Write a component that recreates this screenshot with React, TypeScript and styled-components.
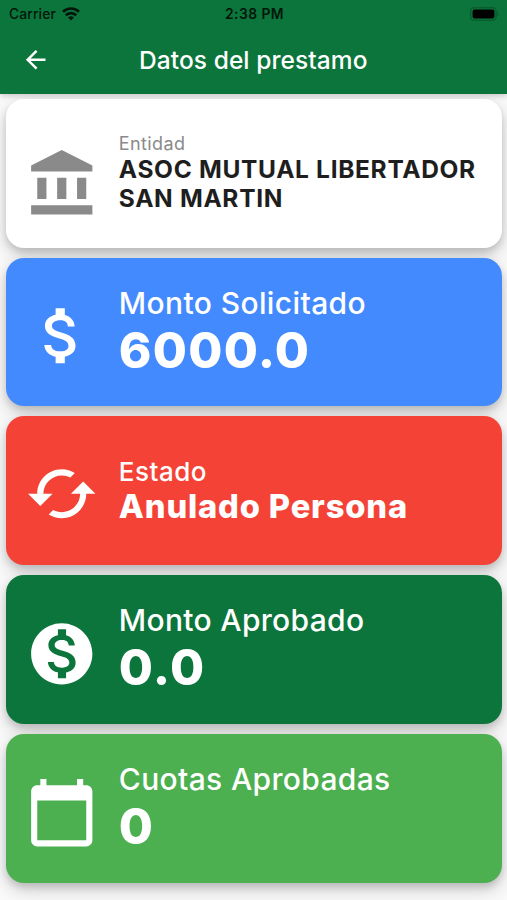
import React from "react";
import styled, { createGlobalStyle } from "styled-components";

const GlobalStyle = createGlobalStyle`
  * { box-sizing: border-box; }
  body { margin: 0; background: #fafafa; overflow: hidden; }
`;

const Screen = styled.main`
  width: 507px;
  height: 900px;
  display: flex;
  flex-direction: column;
  overflow: hidden;
  background: #fafafa;
  font-family: Inter, "Liberation Sans", sans-serif;
`;

const Header = styled.header`
  flex: none;
  height: 93.6px;
  background: #0b753b;
  box-shadow: 0 2px 6px rgba(0, 0, 0, 0.2);
`;

const StatusBar = styled.div`
  height: 27px;
  padding: 1px 7px 0 9px;
  display: grid;
  grid-template-columns: 1fr auto 1fr;
  align-items: center;
  color: #03150b;
  font-size: 13.8px;
  line-height: 26px;
`;

const Carrier = styled.div`
  display: flex;
  align-items: center;
  gap: 6px;
  font-weight: 500;
  letter-spacing: 0.15px;
`;

const Clock = styled.div`
  font-weight: 600;
  letter-spacing: 0.45px;
`;

const BatterySlot = styled.div`
  display: flex;
  justify-content: flex-end;
`;

const NavBar = styled.div`
  height: 65.4px;
  padding: 0 21px 0 20.5px;
  display: grid;
  grid-template-columns: 29.4px 1fr 29.4px;
  align-items: center;
`;

const BackButton = styled.button`
  display: flex;
  padding: 0;
  border: 0;
  background: none;
  color: #fff;
`;

const Title = styled.h1`
  margin: 0;
  padding-top: 1.4px;
  text-align: center;
  color: #fff;
  font-size: 24.5px;
  line-height: 29px;
  font-weight: 500;
  letter-spacing: 0.08px;
`;

const CardList = styled.section`
  display: flex;
  flex-direction: column;
  gap: 10px;
  padding: 5.2px 5px 0 6px;
`;

const Card = styled.article<{ $bg: string; $fg: string }>`
  height: 148.8px;
  flex: none;
  display: flex;
  align-items: center;
  gap: 20px;
  padding: 0 19.3px;
  border-radius: 18px;
  background: ${(p) => p.$bg};
  color: ${(p) => p.$fg};
  box-shadow: 0 4px 7px rgba(0, 0, 0, 0.13), 0 7px 18px rgba(0, 0, 0, 0.18);
`;

const CardIcon = styled.svg<{ $drop: number }>`
  flex: none;
  width: 73.5px;
  height: 73.5px;
  margin-top: ${(p) => p.$drop * 2}px;
  fill: currentColor;
`;

const Copy = styled.div<{ $top: number }>`
  flex: 1;
  min-width: 0;
  padding-top: ${(p) => p.$top}px;
`;

const Label = styled.div<{ $size: number; $spacing: number; $weight: number }>`
  font-size: ${(p) => p.$size}px;
  font-weight: ${(p) => p.$weight};
  line-height: 1.2;
  letter-spacing: ${(p) => p.$spacing}px;
  white-space: nowrap;
`;

const Value = styled.div<{ $size: number; $spacing: number; $weight: number; $color: string }>`
  font-size: ${(p) => p.$size}px;
  font-weight: ${(p) => p.$weight};
  line-height: 1.195;
  letter-spacing: ${(p) => p.$spacing}px;
  color: ${(p) => p.$color};
  white-space: pre-line;
`;

const cards = [
  {
    label: "Entidad", value: "ASOC MUTUAL LIBERTADOR\nSAN MARTIN",
    bg: "#ffffff", fg: "#8a8a8a", valueColor: "#1e1e1e", drop: 11, top: 0.7,
    labelSize: 18, labelSpacing: 0.4, labelWeight: 400, valueSize: 24.5, valueSpacing: 0.67, weight: 700,
    path: "M4 10h3v7H4zM10.5 10h3v7h-3zM2 19h20v3H2zM17 10h3v7h-3zM12 1L2 6v2h20V6z",
  },
  {
    label: "Monto Solicitado", value: "6000.0",
    bg: "#448aff", fg: "#ffffff", valueColor: "#ffffff", drop: 3.7, top: 2,
    labelSize: 30, labelSpacing: 0.38, labelWeight: 450, valueSize: 49.4, valueSpacing: 1.3, weight: 800,
    path: "M11.8 10.9c-2.27-.59-3-1.2-3-2.15 0-1.09 1.01-1.85 2.7-1.85 1.78 0 2.44.85 2.5 2.1h2.21c-.07-1.72-1.12-3.3-3.21-3.81V3h-3v2.16c-1.94.42-3.5 1.68-3.5 3.61 0 2.31 1.91 3.46 4.7 4.13 2.5.6 3 1.48 3 2.41 0 .69-.49 1.79-2.7 1.79-2.06 0-2.87-.92-2.98-2.1h-2.2c.12 2.19 1.76 3.42 3.68 3.83V21h3v-2.15c1.95-.37 3.5-1.5 3.5-3.55 0-2.84-2.43-3.81-4.7-4.4z",
  },
  {
    label: "Estado", value: "Anulado Persona",
    bg: "#f44336", fg: "#ffffff", valueColor: "#ffffff", drop: 2.6, top: -0,
    labelSize: 26, labelSpacing: 0.5, labelWeight: 450, valueSize: 32.7, valueSpacing: 0.83, weight: 800,
    path: "M19 8l-4 4h3c0 3.31-2.69 6-6 6-1.01 0-1.97-.25-2.8-.7l-1.46 1.46C8.97 19.54 10.43 20 12 20c4.42 0 8-3.58 8-8h3l-4-4zM6 12c0-3.31 2.69-6 6-6 1.01 0 1.97.25 2.8.7l1.46-1.46C15.03 4.46 13.57 4 12 4c-4.42 0-8 3.58-8 8H1l4 4 4-4H6z",
  },
  {
    label: "Monto Aprobado", value: "0.0",
    bg: "#0b753b", fg: "#ffffff", valueColor: "#ffffff", drop: 3.7, top: 0.4,
    labelSize: 30, labelSpacing: 0.32, labelWeight: 450, valueSize: 49.4, valueSpacing: 1.3, weight: 800,
    path: "M12 2C6.48 2 2 6.48 2 12s4.48 10 10 10 10-4.48 10-10S17.52 2 12 2zm1.41 16.09V20h-2.67v-1.93c-1.71-.36-3.16-1.46-3.27-3.4h1.96c.1 1.05.82 1.87 2.65 1.87 1.96 0 2.4-.98 2.4-1.59 0-.83-.44-1.61-2.67-2.14-2.48-.6-4.18-1.62-4.18-3.67 0-1.72 1.39-2.84 3.11-3.21V4h2.67v1.95c1.86.45 2.79 1.86 2.85 3.39H14.3c-.05-1.11-.64-1.87-2.22-1.87-1.5 0-2.4.68-2.4 1.64 0 .84.65 1.39 2.67 1.91s4.18 1.39 4.18 3.91c-.01 1.83-1.38 2.83-3.12 3.16z",
  },
  {
    label: "Cuotas Aprobadas", value: "0",
    bg: "#4caf50", fg: "#ffffff", valueColor: "#ffffff", drop: 3.9, top: 0.4,
    labelSize: 30, labelSpacing: 0.34, labelWeight: 450, valueSize: 49.4, valueSpacing: 1.3, weight: 800,
    path: "M20 3h-1V1h-2v2H7V1H5v2H4c-1.1 0-2 .9-2 2v16c0 1.1.9 2 2 2h16c1.1 0 2-.9 2-2V5c0-1.1-.9-2-2-2zm0 18H4V8h16v13z",
  },
];

export default function App() {
  return (
    <Screen>
      <GlobalStyle />
      <Header>
        <StatusBar>
          <Carrier>
            Carrier
            <svg width="18" height="14" viewBox="0 0 18 14" fill="none" stroke="currentColor" strokeWidth="2.7">
              <path d="M1 4.8a11.4 11.4 0 0 1 16 0" />
              <path d="M3.8 8.2a7.4 7.4 0 0 1 10.4 0" />
              <path d="M9 13.4 6.1 10.6a4.2 4.2 0 0 1 5.8 0z" fill="currentColor" stroke="none" />
            </svg>
          </Carrier>
          <Clock>2:38 PM</Clock>
          <BatterySlot>
            <svg width="30" height="14" viewBox="0 0 30 14">
              <rect x="0.7" y="0.7" width="25.4" height="12.6" rx="3.5" fill="none" stroke="#07552b" strokeWidth="1.1" />
              <rect x="2.6" y="2.6" width="21.8" height="8.8" rx="1.8" fill="#000" />
              <path d="M27.6 5v4c1.4-.5 1.4-3.5 0-4z" fill="#07552b" />
            </svg>
          </BatterySlot>
        </StatusBar>
        <NavBar>
          <BackButton aria-label="Volver">
            <svg width="29.4" height="29.4" viewBox="0 0 24 24" fill="currentColor">
              <path d="M20 11H7.83l5.59-5.59L12 4l-8 8 8 8 1.41-1.41L7.83 13H20v-2z" />
            </svg>
          </BackButton>
          <Title>Datos del prestamo</Title>
        </NavBar>
      </Header>
      <CardList>
        {cards.map((c) => (
          <Card key={c.label} $bg={c.bg} $fg={c.fg}>
            <CardIcon $drop={c.drop} viewBox="0 0 24 24" aria-hidden="true">
              <path d={c.path} />
            </CardIcon>
            <Copy $top={c.top}>
              <Label $size={c.labelSize} $spacing={c.labelSpacing} $weight={c.labelWeight}>
                {c.label}
              </Label>
              <Value $size={c.valueSize} $spacing={c.valueSpacing} $weight={c.weight} $color={c.valueColor}>
                {c.value}
              </Value>
            </Copy>
          </Card>
        ))}
      </CardList>
    </Screen>
  );
}
